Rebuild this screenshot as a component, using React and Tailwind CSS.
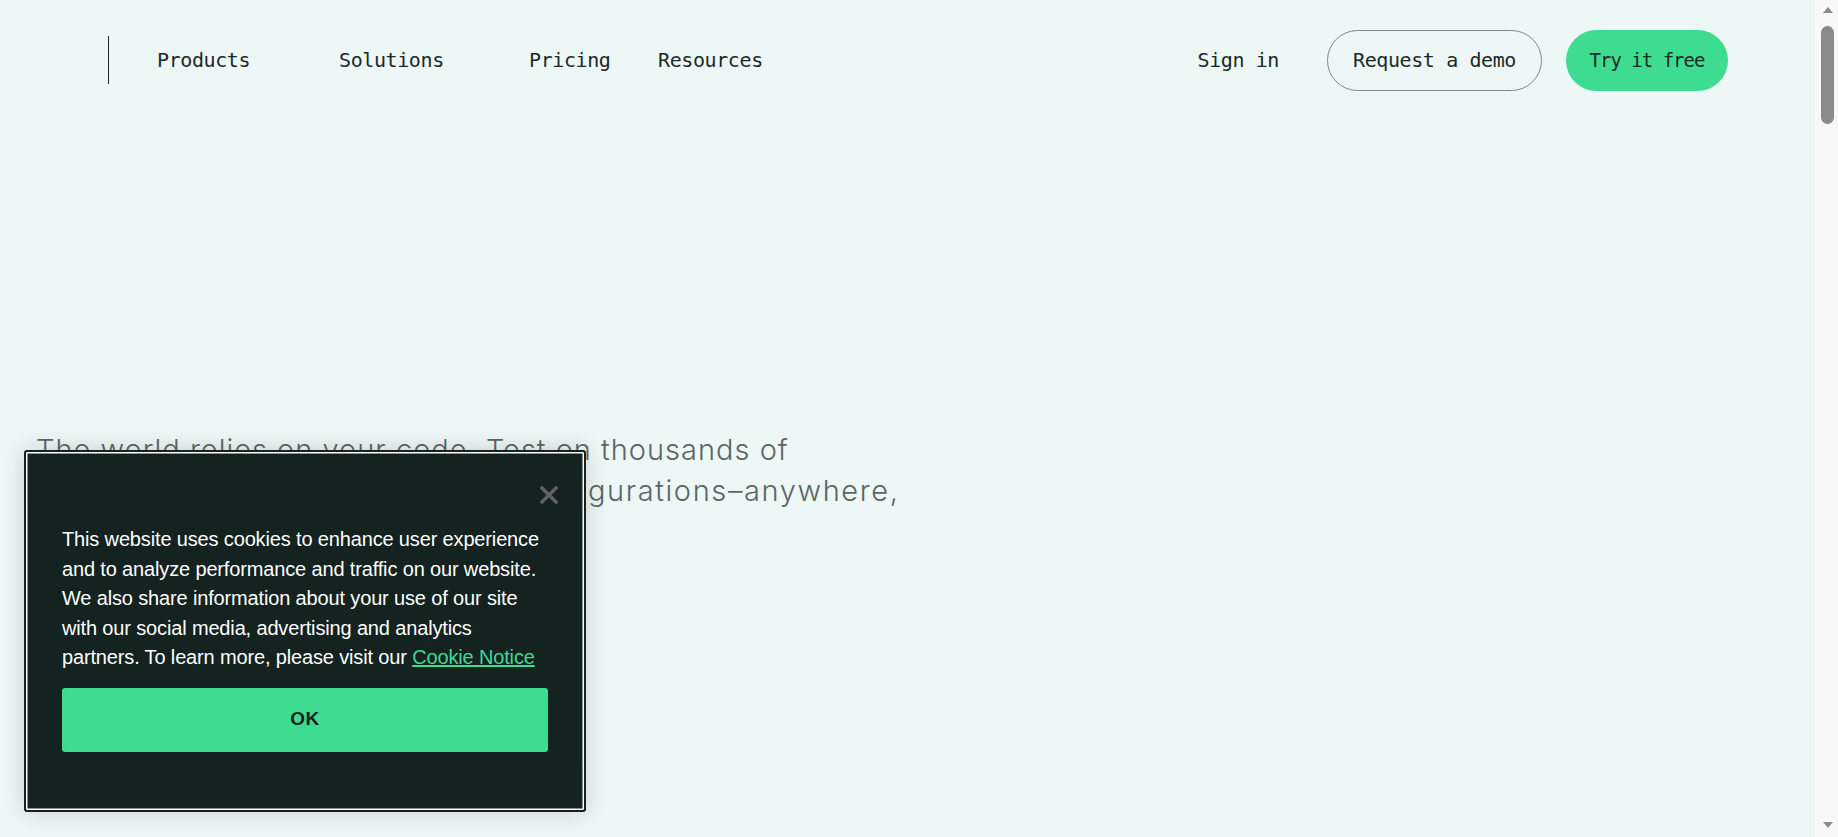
const mono = "font-['DejaVu_Sans_Mono',monospace]";

function Scrollbar() {
  return (
    <div className="flex w-[23px] shrink-0 flex-col items-center bg-[#f8f8f8] pl-[2px]">
      <svg width="12" height="8" viewBox="0 0 12 8" className="mt-[6px]">
        <path d="M6 1 L11 7 L1 7 Z" fill="#8a8a8a" />
      </svg>
      <div className="mt-[12px] h-[98px] w-[13px] rounded-full bg-[#8a8a8a]" />
      <div className="flex-1" />
      <svg width="12" height="8" viewBox="0 0 12 8" className="mb-[8px]">
        <path d="M1 1 L11 1 L6 7 Z" fill="#8a8a8a" />
      </svg>
    </div>
  );
}

function CookieBanner() {
  return (
    <div className="absolute left-[24px] top-[450px] h-[362px] w-[562px] rounded-[3px] border-2 border-[#142220] bg-[#142220] shadow-[inset_0_0_0_1.5px_#ffffff,0_0_22px_rgba(20,34,32,0.18)]">
      <div className="flex justify-end pr-[26px] pt-[34px]">
        <button type="button" aria-label="Close">
          <svg width="18" height="18" viewBox="0 0 18 18">
            <path d="M2 2 L16 16 M16 2 L2 16" stroke="#5e6260" strokeWidth="3.4" strokeLinecap="square" />
          </svg>
        </button>
      </div>
      <div className="px-[36px] pt-[21px]">
        <p className="font-['Liberation_Sans',Arial,sans-serif] text-[20px] leading-[29.5px] tracking-[-0.15px] text-white">
          This website uses cookies to enhance user experience
          <br />
          and to analyze performance and traffic on our website.
          <br />
          We also share information about your use of our site
          <br />
          with our social media, advertising and analytics
          <br />
          partners. To learn more, please visit our{" "}
          <a href="#" className="text-[#3ddc91] underline">
            Cookie Notice
          </a>
        </p>
        <button
          type="button"
          className="mt-[15px] flex h-[64px] w-full items-center justify-center rounded-[3px] bg-[#3ddc91] font-['Liberation_Sans',Arial,sans-serif] text-[19px] font-bold tracking-[0.5px] text-[#142220]"
        >
          OK
        </button>
      </div>
    </div>
  );
}

export default function App() {
  return (
    <div className="flex h-[837px] w-full overflow-hidden bg-[#edf7f5]">
      <div className="relative min-w-0 flex-1">
        <header className={`flex h-[120px] items-center pl-[108px] pr-[87px] text-[20px] tracking-[-0.4px] text-[#1b2a28] ${mono}`}>
          <div className="h-[48px] w-px bg-[#1b2a28]" />
          <nav className="ml-[48px] flex items-center">
            <a href="#" className="w-[182px]">Products</a>
            <a href="#" className="w-[190px]">Solutions</a>
            <a href="#" className="w-[129px]">Pricing</a>
            <a href="#">Resources</a>
          </nav>
          <div className="ml-auto flex items-center">
            <a href="#">Sign in</a>
            <a
              href="#"
              className="ml-[48px] flex h-[61px] w-[215px] items-center justify-center rounded-full border border-[#7f8a88]"
            >
              Request a demo
            </a>
            <a
              href="#"
              className="ml-[24px] flex h-[61px] w-[162px] items-center justify-center rounded-full bg-[#3ddc91] text-[19px] tracking-[-1px]"
            >
              Try it free
            </a>
          </div>
        </header>

        <main className="pl-[36px] pt-[309px]">
          <p className="font-['Inter',sans-serif] text-[29px] font-light leading-[41px] tracking-[1px] text-[#5b6663]">
            The world relies on your code. Test on thousands of
            <br />
            <span className="tracking-[1.6px]">real devices, browsers, and OS configurations–anywhere,</span>
            <br />
            any time.
          </p>
        </main>

        <CookieBanner />
      </div>
      <Scrollbar />
    </div>
  );
}
